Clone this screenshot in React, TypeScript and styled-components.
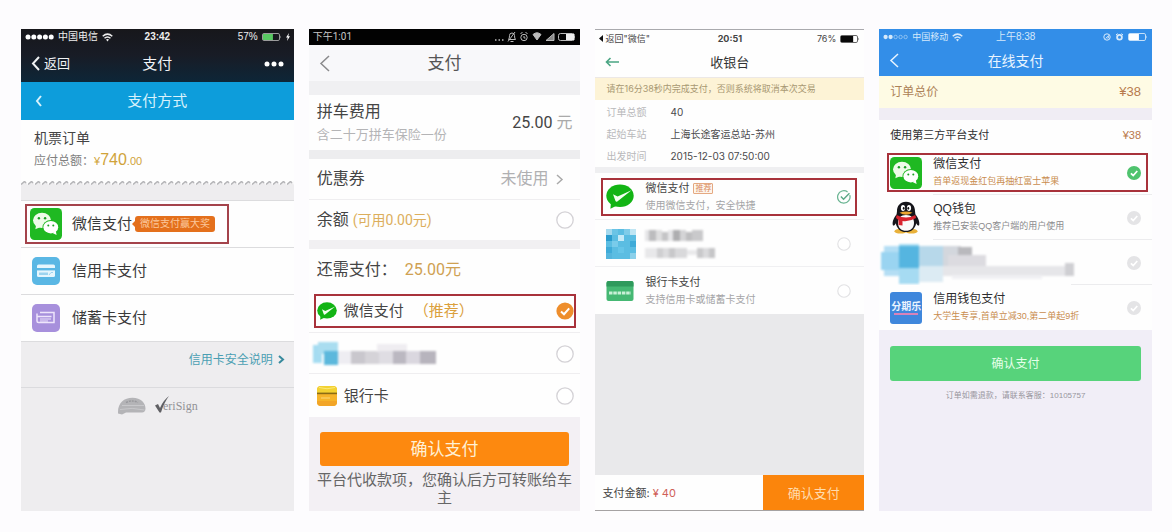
import React, { useState } from 'react';
import styled, { createGlobalStyle } from 'styled-components';

const GlobalStyle = createGlobalStyle`
  *, *::before, *::after { box-sizing: border-box; }
  body {
    margin: 0;
    background: #fdfcfe;
    font-family: "Liberation Sans", "Noto Sans CJK SC", sans-serif;
    color: #333;
  }
  button, input { font: inherit; margin: 0; }
  button { border: 0; padding: 0; background: none; color: inherit; cursor: pointer; }
  h1, h2, p, ul, dl, dd { margin: 0; padding: 0; font-weight: 400; }
  ul { list-style: none; }
  svg { display: block; flex: none; }
`;

/* ---------- shared layout ---------- */

const Gallery = styled.main`
  display: grid;
  grid-template-columns: 273fr 272fr 269fr 273fr;
  gap: 15px;
  min-height: 100vh;
  padding: 29px 20px 21px 21px;
`;

const Phone = styled.section<{ $bg: string; $font?: string }>`
  display: flex;
  flex-direction: column;
  min-width: 0;
  background: ${(p) => p.$bg};
  font-family: ${(p) => p.$font ?? '"Liberation Sans"'}, "Noto Sans CJK SC", sans-serif;
`;

const StatusBar = styled.div<{ $h?: number; $color: string; $size?: number; $bg?: string }>`
  display: grid;
  grid-template-columns: 1fr auto 1fr;
  align-items: center;
  min-height: ${(p) => p.$h ?? 16}px;
  padding: 0 4px;
  font-size: ${(p) => p.$size ?? 10}px;
  line-height: 14px;
  color: ${(p) => p.$color};
  background: ${(p) => p.$bg ?? 'transparent'};
`;

const StatusGroup = styled.span<{ $end?: boolean }>`
  display: flex;
  align-items: center;
  gap: 4px;
  justify-content: ${(p) => (p.$end ? 'flex-end' : 'flex-start')};
  white-space: nowrap;
`;

const NavBar = styled.header<{ $h: number; $bg?: string; $color: string }>`
  display: grid;
  grid-template-columns: 1fr auto 1fr;
  align-items: center;
  min-height: ${(p) => p.$h}px;
  padding: 0 10px;
  background: ${(p) => p.$bg ?? 'transparent'};
  color: ${(p) => p.$color};
`;

const NavTitle = styled.h1<{ $size: number; $weight?: number }>`
  font-size: ${(p) => p.$size}px;
  line-height: 24px;
  font-weight: ${(p) => p.$weight ?? 400};
`;

const NavButton = styled.button<{ $end?: boolean }>`
  display: flex;
  align-items: center;
  gap: 4px;
  justify-self: ${(p) => (p.$end ? 'end' : 'start')};
  font-size: 13px;
  line-height: 20px;
`;

const Band = styled.div<{ $h: number; $bg: string; $line?: string }>`
  min-height: ${(p) => p.$h}px;
  background: ${(p) => p.$bg};
  border-bottom: ${(p) => (p.$line ? `1px solid ${p.$line}` : '0')};
`;

const Row = styled.div<{ $h: number; $line?: string; $bg?: string; $pad?: string }>`
  display: flex;
  align-items: center;
  justify-content: space-between;
  min-height: ${(p) => p.$h}px;
  padding: ${(p) => p.$pad ?? '0 8px'};
  background: ${(p) => p.$bg ?? '#fefefe'};
  border-bottom: ${(p) => (p.$line ? `1px solid ${p.$line}` : '0')};
`;

const Text = styled.span<{ $size: number; $color?: string; $lh?: number; $weight?: number }>`
  font-size: ${(p) => p.$size}px;
  line-height: ${(p) => p.$lh ?? 20}px;
  color: ${(p) => p.$color ?? '#444'};
  font-weight: ${(p) => p.$weight ?? 400};
  white-space: nowrap;
`;

const Stack = styled.div`
  display: flex;
  flex-direction: column;
  flex: 1;
  min-width: 0;
`;

const Inline = styled.span<{ $gap?: number }>`
  display: flex;
  align-items: center;
  gap: ${(p) => p.$gap ?? 4}px;
`;

/* ---------- selectable options ---------- */

const OptionItem = styled.li<{ $h: number; $pad: string; $line?: string; $indent?: number }>`
  display: flex;
  flex-direction: column;
  justify-content: center;
  position: relative;
  min-height: ${(p) => p.$h}px;
  padding: ${(p) => p.$pad};
  background: #fefefe;
  &:not(:last-child)::after {
    content: '';
    position: absolute;
    left: ${(p) => p.$indent ?? 0}px;
    right: 0;
    bottom: 0;
    height: 1px;
    background: ${(p) => p.$line ?? '#eee'};
  }
`;

const OptionLabel = styled.label<{ $h: number; $pad: string; $gap: number; $marked?: boolean }>`
  display: flex;
  align-items: center;
  gap: ${(p) => p.$gap}px;
  min-height: ${(p) => p.$h}px;
  padding: ${(p) => p.$pad};
  border: 2px solid ${(p) => (p.$marked ? '#a8323b' : 'transparent')};
  cursor: pointer;
`;

const Control = styled.span<{ $d: number }>`
  position: relative;
  flex: none;
  width: ${(p) => p.$d}px;
  height: ${(p) => p.$d}px;
  svg { position: absolute; inset: 0; pointer-events: none; }
`;

const NativeInput = styled.input`
  appearance: none;
  display: block;
  width: 100%;
  height: 100%;
  border-radius: 50%;
  cursor: pointer;
`;

type Mark = 'orange' | 'outline' | 'green';

function Choice({ mark, size, type = 'radio', name, checked, label, onChange }: {
  mark: Mark; size: number; type?: 'radio' | 'checkbox'; name: string; checked: boolean; label?: string; onChange: () => void;
}) {
  const tick = 'M5 9.4 8 12.2 13.2 6.4';
  return (
    <Control $d={size}>
      <NativeInput type={type} name={name} checked={checked} aria-label={label} onChange={onChange} />
      <svg viewBox="0 0 18 18" width={size} height={size} fill="none">
        {mark === 'orange' && (checked
          ? <><circle cx="9" cy="9" r="8.6" fill="#ee8e2c" /><path d={tick} stroke="#fff" strokeWidth="2" /></>
          : <circle cx="9" cy="9" r="8.2" stroke="#d4d2d6" strokeWidth="1.3" fill="#fff" />)}
        {mark === 'outline' && (checked
          ? <><path d="M16.4 6.6A8 8 0 1 1 13.6 2.6" stroke="#6bb593" strokeWidth="1.6" /><path d="M5 8.4 8.4 11.8 16 4.2" stroke="#5aa886" strokeWidth="1.8" /></>
          : <circle cx="9" cy="9" r="8" stroke="#e2e2e4" strokeWidth="1.5" fill="#fff" />)}
        {mark === 'green' && (
          <><circle cx="9" cy="9" r="9" fill={checked ? '#4fc36e' : '#e4e4e6'} /><path d={tick} stroke="#fff" strokeWidth="2.2" /></>
        )}
      </svg>
    </Control>
  );
}

/* ---------- icons ---------- */

const Chevron = ({ dir = 'left', w, h, sw = 2, color = 'currentColor' }: { dir?: 'left' | 'right'; w: number; h: number; sw?: number; color?: string }) => (
  <svg width={w} height={h} viewBox={`0 0 ${w} ${h}`} fill="none" stroke={color} strokeWidth={sw}>
    <path d={dir === 'left' ? `M${w - 1} 1 2 ${h / 2} ${w - 1} ${h - 1}` : `M1 1 ${w - 2} ${h / 2} 1 ${h - 1}`} />
  </svg>
);

const Signal = ({ full, color, w = 29 }: { full: number; color: string; w?: number }) => (
  <svg width={w} height="6" viewBox="0 0 29 6">
    {[0, 1, 2, 3, 4].map((i) => (
      <circle key={i} cx={3 + i * 5.8} cy="3" r={i < full ? 2.5 : 2} fill={i < full ? color : 'none'} stroke={color} strokeWidth={i < full ? 0 : 0.6} />
    ))}
  </svg>
);

const Wifi = ({ color }: { color: string }) => (
  <svg width="11" height="9" viewBox="0 0 11 9" fill="none" stroke={color} strokeWidth="1.5">
    <path d="M.7 3.2Q5.5-1 10.3 3.2M2.5 5.3Q5.5 2.7 8.5 5.3" />
    <path d="M4 6.6Q5.5 5.6 7 6.6L5.5 8.4Z" fill={color} stroke="none" />
  </svg>
);

const Battery = ({ color, fill, level }: { color: string; fill: string; level: number }) => (
  <svg width="20" height="8" viewBox="0 0 20 8">
    <rect x=".5" y=".5" width="17" height="7" rx="1.4" fill="none" stroke={color} strokeWidth=".9" />
    <rect x="1" y="1" width={16 * level} height="6" fill={fill} />
    <path d="M18.4 2.5q1.4 1.5 0 3z" fill={color} />
  </svg>
);

const WeChatIcon = () => (
  <svg width="32" height="32" viewBox="0 0 32 32">
    <rect width="32" height="32" rx="4.5" fill="#1fb922" />
    <ellipse cx="12" cy="12.3" rx="9" ry="7.6" fill="#eefbe9" />
    <path d="M6 17.5 5.300 21.300 10 19.200Z" fill="#eefbe9" />
    <ellipse cx="20.800" cy="19.200" rx="8.300" ry="7.100" fill="#1fb922" />
    <ellipse cx="20.800" cy="19.200" rx="7.400" ry="6.200" fill="#fff" />
    <path d="M22.500 25 26.600 27 25.800 23Z" fill="#fff" />
    <g fill="#1b9e24">
      <circle cx="8.900" cy="10.300" r="1.200" /><circle cx="15.100" cy="10.300" r="1.200" />
      <circle cx="18.300" cy="17.500" r="1" /><circle cx="23.300" cy="17.500" r="1" />
    </g>
  </svg>
);

const WeChatPayIcon = ({ w, h }: { w: number; h: number }) => (
  <svg width={w} height={h} viewBox="0 0 28 25">
    <ellipse cx="14" cy="11.700" rx="13.700" ry="11.300" fill="#12b414" />
    <path d="M5 18 4.400 24.700 11 21.500Z" fill="#12b414" />
    <path d="M7 10.200 11.600 12.500 25.500 6.200 11.300 17.500C10.500 18 9.900 17.600 9.500 16.900Z" fill="#f2fff0" />
  </svg>
);

const CreditIcon = () => (
  <svg width="28" height="28" viewBox="0 0 28 28">
    <rect width="28" height="28" rx="5" fill="#5ab7e4" />
    <rect x="5" y="7.500" width="18" height="12.500" rx="1.500" fill="#e6f6fd" />
    <rect x="5" y="11" width="18" height="2.400" fill="#5ab7e4" />
    <rect x="7" y="15.500" width="9" height="2.500" fill="#9dd4ef" />
    <path d="M17 18l2-2.500h2" stroke="#9dd4ef" fill="none" />
  </svg>
);

const DebitIcon = () => (
  <svg width="28" height="28" viewBox="0 0 28 28" fill="none" stroke="#eee5fb" strokeWidth="1.500">
    <rect width="28" height="28" rx="5" fill="#a790dc" stroke="none" />
    <path d="M8 8.500H22V18.500H6.500Q5 18.500 5 17V9.500M5 12.500H19.500" />
    <path d="M8 15h11M8 17h8" strokeWidth="1" />
  </svg>
);

const BankCardYellow = () => (
  <svg width="20" height="20" viewBox="0 0 20 20">
    <rect width="20" height="20" rx="4" fill="#f6b42a" />
    <path d="M0 8V4a4 4 0 0 1 4-4h12a4 4 0 0 1 4 4v4Z" fill="#f3d232" />
    <path d="M2 1.500Q10 4 18 1.500" stroke="#fbe979" fill="none" />
    <rect y="6.600" width="20" height="1.600" fill="#8b6c14" />
    <path d="M0 15v1a4 4 0 0 0 4 4h12a4 4 0 0 0 4-4v-1Z" fill="#f2a527" />
    <path d="M4 12h9" stroke="#fcd979" />
  </svg>
);

const BankCardGreen = () => (
  <svg width="28" height="28" viewBox="0 0 28 28">
    <rect x=".500" y="4" width="27" height="20" rx="2" fill="#45b873" />
    <path d="M.500 9.500V6a2 2 0 0 1 2-2h23a2 2 0 0 1 2 2v3.500Z" fill="#2f9a5c" />
    <path d="M3 16h22" stroke="#c9f0d7" strokeWidth="3" strokeDasharray="3.500 .8" />
  </svg>
);

const PenguinIcon = () => (
  <svg width="32" height="33" viewBox="0 0 32 33">
    <ellipse cx="10.500" cy="30.200" rx="6" ry="2.400" fill="#e9b13a" />
    <ellipse cx="21.500" cy="30.200" rx="6" ry="2.400" fill="#e9b13a" />
    <path d="M16 .800c-6 0-9.200 4.500-9 9.500l-.400 3C4.200 16.500 2 20.500 2.800 24c.500 1.400 2 .200 3-1.800C6.800 27.500 10.500 31 16 31s9.200-3.500 10.200-8.800c1 2 2.500 3.200 3 1.800.8-3.500-1.400-7.500-3.800-10.700l-.4-3C25.200 5.300 22 .800 16 .800Z" fill="#15151a" />
    <path d="M16 14c-5.500 0-8 3.200-8 8 0 5 3.500 7.800 8 7.800s8-2.800 8-7.800c0-4.800-2.500-8-8-8Z" fill="#fafafa" />
    <ellipse cx="13" cy="7" rx="2.100" ry="3" fill="#fff" /><ellipse cx="19" cy="7" rx="2.100" ry="3" fill="#fff" />
    <ellipse cx="13.700" cy="7.300" rx=".9" ry="1.400" fill="#111" /><ellipse cx="18.300" cy="7.300" rx=".9" ry="1.400" fill="#111" />
    <path d="M9.500 11.800Q16 9.400 22.500 11.800 16 15.800 9.500 11.800Z" fill="#eba52f" />
    <path d="M6.700 14Q16 19.200 25.300 14l.7 3q-6.500 4-13.500 3v4.500l-4-.5v-5L6 17Z" fill="#d8232e" />
  </svg>
);

const FqlBadge = styled.span`
  display: flex;
  flex-direction: column;
  align-items: center;
  justify-content: center;
  flex: none;
  width: 32px;
  height: 32px;
  border-radius: 3px;
  background: #3f87dc;
  color: #e9f4ff;
  font-size: 10px;
  font-weight: 700;
  line-height: 13px;
  &::after { content: ''; width: 24px; height: 2px; background: #d982b8; }
`;

/* Mosaic squares covering a hidden provider's name. */
function Mosaic({ w, h, cells, soft = 1 }: { w: number; h: number; soft?: number; cells: [number, number, number, number, string][] }) {
  return (
    <svg width={w} height={h} viewBox={`0 0 ${w} ${h}`} overflow="visible" aria-hidden="true">
      <g style={{ filter: `blur(${soft}px)` }}>
        {cells.map(([x, y, cw, ch, c], i) => <rect key={i} x={x} y={y} width={cw} height={ch} fill={c} />)}
      </g>
    </svg>
  );
}

/* ---------- phone 1 ---------- */

const DarkTop = styled.div`
  background: linear-gradient(#17171b, #181c26 50%, #0d2638);
`;

const OrderBlock = styled.div`
  display: flex;
  flex-direction: column;
  padding: 8px 13px;
  background: #fefefe;
`;

const Price = styled.span`
  font-size: 16px;
  color: #d0a33a;
  small { font-size: 11px; }
`;

const MethodItem = styled.li`
  display: flex;
  align-items: center;
  min-height: 47px;
  padding: 0 4px;
  background: #fefefe;
  border-bottom: 1px solid #dcdcde;
`;

const MethodButton = styled.button<{ $marked?: boolean }>`
  display: flex;
  align-items: center;
  min-height: 40px;
  padding: 0 12px 0 3px;
  border: 2px solid ${(p) => (p.$marked ? '#a4434b' : 'transparent')};
  font-size: 15px;
  line-height: 22px;
  color: #3a3a3a;
  white-space: nowrap;
`;

const IconSlot = styled.span`
  display: flex;
  justify-content: center;
  width: 32px;
  margin-right: 10px;
`;

const Ribbon = styled.span`
  position: relative;
  margin-left: 3px;
  padding: 0 5px;
  border-radius: 3px;
  background: #e4701c;
  color: #fbc79b;
  font-size: 10px;
  line-height: 16px;
  &::before {
    content: '';
    position: absolute;
    left: -3px;
    top: 4px;
    border: 4px solid transparent;
    border-left: 0;
    border-right-color: #e4701c;
  }
`;

const LinkRow = styled.div`
  display: flex;
  justify-content: flex-end;
  align-items: center;
  min-height: 46px;
  padding: 0 9px 10px;
  border-bottom: 1px solid #dbdbde;
`;

const HelpLink = styled.a`
  display: flex;
  align-items: center;
  gap: 5px;
  color: #4b9fb3;
  font-size: 12px;
  line-height: 20px;
  text-decoration: none;
`;

const Seals = styled.div`
  display: flex;
  justify-content: center;
  align-items: center;
  gap: 9px;
  padding-top: 8px;
`;

const Verisign = styled.span`
  display: flex;
  align-items: center;
  font-family: "Liberation Serif", serif;
  font-size: 12px;
  line-height: 20px;
  color: #929296;
  svg { margin-right: -6px; }
`;

function FlightPhone() {
  return (
    <Phone $bg="#eeedef">
      <DarkTop>
        <StatusBar $color="#eee">
          <StatusGroup><Signal full={5} color="#fff" />中国电信<Wifi color="#eee" /></StatusGroup>
          <b>23:42</b>
          <StatusGroup $end>
            57%<Battery color="#aaa" fill="#58c862" level={0.62} />
            <svg width="4" height="8" viewBox="0 0 4 8"><path d="M3 0 0 4.500H1.700L1 8 4 3.300H2.300Z" fill="#fff" /></svg>
          </StatusGroup>
        </StatusBar>
        <NavBar $h={37} $color="#f0f2f4">
          <NavButton><Chevron w={9} h={15} />返回</NavButton>
          <NavTitle $size={15}>支付</NavTitle>
          <NavButton $end aria-label="更多">
            <svg width="20" height="6" viewBox="0 0 20 6" fill="#fff"><circle cx="3" cy="3" r="2.500" /><circle cx="10" cy="3" r="2.500" /><circle cx="17" cy="3" r="2.500" /></svg>
          </NavButton>
        </NavBar>
      </DarkTop>
      <NavBar $h={38} $bg="#0d9ddb" $color="#d8f2fc">
        <NavButton aria-label="返回上页"><Inline><span /><Chevron w={7} h={12} /></Inline></NavButton>
        <NavTitle as="h2" $size={15}>支付方式</NavTitle>
      </NavBar>
      <OrderBlock>
        <Text $size={14}>机票订单</Text>
        <Text $size={12} $lh={24} $color="#808080">应付总额：<Price><small>¥</small>740<small>.00</small></Price></Text>
      </OrderBlock>
      <svg width="100%" height="4" aria-hidden="true">
        <defs>
          <pattern id="tear" width="7" height="4" patternUnits="userSpaceOnUse">
            <rect width="7" height="4" fill="#fefefe" />
            <path d="M0 4 4 0 7 4Z" fill="#eeedef" /><path d="M0 3.500 3.500.500 5 2" stroke="#b5b5b8" strokeWidth="1.500" fill="none" />
          </pattern>
        </defs>
        <rect width="100%" height="4" fill="url(#tear)" />
      </svg>
      <Band $h={16} $bg="#eeedef" $line="#dcdcde" />
      <ul>
        <MethodItem>
          <MethodButton $marked><IconSlot><WeChatIcon /></IconSlot>微信支付<Ribbon>微信支付赢大奖</Ribbon></MethodButton>
        </MethodItem>
        <MethodItem><MethodButton><IconSlot><CreditIcon /></IconSlot>信用卡支付</MethodButton></MethodItem>
        <MethodItem><MethodButton><IconSlot><DebitIcon /></IconSlot>储蓄卡支付</MethodButton></MethodItem>
      </ul>
      <LinkRow>
        <HelpLink href="#card-safety">信用卡安全说明<Chevron dir="right" w={7} h={9} color="#388a9d" /></HelpLink>
      </LinkRow>
      <Seals>
        <svg width="29" height="18" viewBox="0 0 29 18">
          <path d="M1 15C1 6 7 .800 15.500.800 24 .800 28.500 6 28.500 11.500c0 2.500-1.500 4-3.500 4H9L5 17.500 1 16.500Z" fill="#b4b4b7" />
          <path d="M5 8.500H27M3 12.500Q15 10 27.500 13" stroke="#c8c8cb" fill="none" />
          <path d="M9 5.500q6-3 12 0" stroke="#98989c" strokeWidth="1.500" strokeDasharray="2 1" fill="none" />
        </svg>
        <Verisign>
          <svg width="14" height="20" viewBox="0 0 14 20"><path d="M0 9.500 3 8 5 12Q8 4.500 14 0 9 6.500 6 16.500H4.500Z" fill="#606064" /></svg>
          eriSign
        </Verisign>
      </Seals>
    </Phone>
  );
}

/* ---------- phone 2 ---------- */

const Footer = styled.footer<{ $bg: string; $pad: string }>`
  display: flex;
  flex-direction: column;
  flex: 1;
  padding: ${(p) => p.$pad};
  background: ${(p) => p.$bg};
`;

const PrimaryButton = styled.button<{ $h: number; $bg: string; $size: number; $color: string }>`
  min-height: ${(p) => p.$h}px;
  margin: 0 8px;
  border-radius: 3px;
  background: ${(p) => p.$bg};
  color: ${(p) => p.$color};
  font-size: ${(p) => p.$size}px;
  line-height: 24px;
`;

const Note = styled.p<{ $size: number; $lh: number; $color: string; $top: number }>`
  margin-top: ${(p) => p.$top}px;
  text-align: center;
  font-size: ${(p) => p.$size}px;
  line-height: ${(p) => p.$lh}px;
  color: ${(p) => p.$color};
`;

const AndroidIcons = () => (
  <svg width="82" height="12" viewBox="0 0 82 12" fill="none" stroke="#bbb" strokeWidth="1">
    <path d="M1 9h1.500M4.500 9H6M8 9h1.500" strokeWidth="1.500" />
    <path d="M14.500 8.500q1-1 1-4a2.500 2.500 0 0 1 5 0q0 3 1 4ZM16.500 10.500h3M21 1 14 10.500" />
    <circle cx="30" cy="6.500" r="3.200" /><path d="M30 5v2h1.500M26.500 3l2-2M33.500 3l-2-2" />
    <path d="M39 3.500Q43 0 47 3.500L43 9Z" fill="#bbb" />
    <path d="M52 9.500 60 2.500V9.500Z" fill="#888" />
    <rect x="64.500" y="2.500" width="16" height="7" rx="2" /><rect x="72" y="3" width="8" height="6" fill="#eee" stroke="none" />
  </svg>
);

function CarpoolPhone() {
  const [method, setMethod] = useState('wechat');
  const [balance, setBalance] = useState(false);
  const line = '#efeef0';
  return (
    <Phone $bg="#f2f0f3" $font="Roboto">
      <StatusBar $bg="#020202" $color="#c8c8c8">
        <StatusGroup>下午1:01</StatusGroup>
        <span />
        <StatusGroup $end><AndroidIcons /></StatusGroup>
      </StatusBar>
      <NavBar $h={36} $bg="#f8f8fa" $color="#555">
        <NavButton aria-label="返回"><Chevron w={11} h={17} sw={1.5} color="#8a8a8c" /></NavButton>
        <NavTitle $size={17}>支付</NavTitle>
      </NavBar>
      <Band $h={14} $bg="#f0f0f2" />
      <Row $h={55}>
        <Stack>
          <Text $size={16} $lh={24}>拼车费用</Text>
          <Text $size={13} $lh={22} $color="#b4b4b6">含二十万拼车保险一份</Text>
        </Stack>
        <Text $size={16}>25.00 <Text $size={16} $color="#aaa">元</Text></Text>
      </Row>
      <Band $h={9} $bg="#ededef" />
      <Row $h={41} $line={line}>
        <Text $size={16}>优惠券</Text>
        <Inline $gap={8}>
          <Text $size={16} $color="#b0b0b2">未使用</Text>
          <Chevron dir="right" w={8} h={11} sw={1.5} color="#aaa" />
          <span />
        </Inline>
      </Row>
      <Row as="label" $h={40} $pad="0 6px 0 8px">
        <Inline>
          <Text $size={16}>余额</Text>
          <Text $size={14} $color="#dcae5c">(可用0.00元)</Text>
        </Inline>
        <Choice mark="orange" size={18} type="checkbox" name="balance" checked={balance} onChange={() => setBalance(!balance)} />
      </Row>
      <Band $h={9} $bg="#f1f0f2" />
      <Row $h={42}>
        <Text $size={16}>还需支付：&nbsp;&nbsp;<Text $size={16} $color="#cfa152">25.00元</Text></Text>
      </Row>
      <ul>
        <OptionItem $h={42} $pad="0 4px 2px 5px" $line={line}>
          <OptionLabel $h={34} $pad="0 0 0 1px" $gap={7} $marked>
            <WeChatPayIcon w={20} h={18} />
            <Stack>
              <Inline $gap={10}>
                <Text $size={15}>微信支付</Text>
                <Text $size={15} $color="#dba03c">（推荐）</Text>
              </Inline>
            </Stack>
            <Choice mark="orange" size={18} name="carpool" checked={method === 'wechat'} onChange={() => setMethod('wechat')} />
          </OptionLabel>
        </OptionItem>
        <OptionItem $h={41} $pad="0 4px 0 5px" $line={line}>
          <OptionLabel $h={34} $pad="0" $gap={7}>
            <Stack>
              <Mosaic w={122} h={26} cells={[
                [-3, 4, 9, 18, '#a5dcf1'], [2, 1, 20, 12, '#a9ddf0'], [8, 10, 14, 14, '#5cb8dc'], [22, 10, 13, 13, '#eeedf2'],
                [35, 10, 14, 13, '#c9c7cd'], [49, 10, 14, 13, '#d5d3d8'], [61, 3, 30, 8, '#efedf1'], [63, 10, 14, 13, '#dfdde3'], [77, 10, 13, 13, '#bbb8c1'],
                [90, 10, 14, 13, '#dad7df'], [104, 10, 16, 13, '#b7b4bd'],
              ]} />
            </Stack>
            <Choice mark="orange" size={18} name="carpool" label="其他支付" checked={method === 'other'} onChange={() => setMethod('other')} />
          </OptionLabel>
        </OptionItem>
        <OptionItem $h={43} $pad="0 4px 0 5px">
          <OptionLabel $h={34} $pad="0 0 0 1px" $gap={7}>
            <BankCardYellow />
            <Stack><Text $size={15}>银行卡</Text></Stack>
            <Choice mark="orange" size={18} name="carpool" checked={method === 'bank'} onChange={() => setMethod('bank')} />
          </OptionLabel>
        </OptionItem>
      </ul>
      <Footer $bg="#f3f0f4" $pad="15px 3px 0">
        <PrimaryButton $h={34} $bg="#fd890f" $size={17} $color="#fff0d5">确认支付</PrimaryButton>
        <Note $size={15} $lh={18} $color="#666" $top={5}>平台代收款项，您确认后方可转账给车主</Note>
      </Footer>
    </Phone>
  );
}

/* ---------- phone 3 ---------- */

const CashierPhone = styled(Phone)`
  border-top: 1px solid #a9a9ad;
`;

const Notice = styled.p`
  padding: 0 11px;
  background: #fdf3d6;
  border-top: 1px solid #ece8e6;
  color: #a89872;
  font-size: 9px;
  line-height: 22px;
  white-space: nowrap;
`;

const Details = styled.dl`
  display: grid;
  grid-template-columns: 64px 1fr;
  padding: 1px 11px 0;
  background: #fefefe;
  font-size: 10px;
  line-height: 22px;
  dt { color: #b9b9bb; }
  dd { color: #4a4a4c; white-space: nowrap; }
`;

const RecommendTag = styled.span`
  padding: 0 1px;
  border: 1px solid #e5a982;
  border-radius: 1px;
  background: #fdf5ec;
  color: #d98a5c;
  font-size: 8px;
  line-height: 9px;
`;

const Filler = styled.div`
  flex: 1;
  background: #e9e9eb;
`;

const PayBar = styled.footer`
  display: grid;
  grid-template-columns: 168fr 101fr;
  min-height: 36px;
  background: #fefefe;
  border-bottom: 1px solid #a5a2a3;
`;

const PayTotal = styled.p`
  display: flex;
  align-items: center;
  gap: 3px;
  padding-left: 7px;
`;

const PayButton = styled.button`
  background: #fb850c;
  color: #ffdcae;
  font-size: 13px;
  line-height: 20px;
`;

function CashierScreen() {
  const [method, setMethod] = useState('wechat');
  const item = { $h: 47, $pad: '0 7px 0 6px', $line: '#f0f0f2' };
  const label = { $h: 38, $pad: '0 4px 0 3px', $gap: 11 };
  return (
    <CashierPhone $bg="#fefefe" $font="Inter">
      <StatusBar $h={17} $size={9} $color="#444">
        <StatusGroup>
          <Inline $gap={2}>
            <svg width="4" height="7" viewBox="0 0 4 7"><path d="M4 0V7L0 3.500Z" fill="#111" /></svg>
            返回"微信"
          </Inline>
        </StatusGroup>
        <b>20:51</b>
        <StatusGroup $end>76%<Battery color="#555" fill="#080808" level={0.76} /></StatusGroup>
      </StatusBar>
      <NavBar $h={30} $color="#333">
        <NavButton aria-label="返回">
          <svg width="14" height="10" viewBox="0 0 14 10" fill="none" stroke="#4aa583" strokeWidth="1.600"><path d="M14 5H1.500M5.500 1 1.500 5 5.500 9" /></svg>
        </NavButton>
        <NavTitle $size={13}>收银台</NavTitle>
      </NavBar>
      <Notice>请在16分38秒内完成支付，否则系统将取消本次交易</Notice>
      <Details>
        <dt>订单总额</dt><dd>40</dd>
        <dt>起始车站</dt><dd>上海长途客运总站-苏州</dd>
        <dt>出发时间</dt><dd>2015-12-03 07:50:00</dd>
      </Details>
      <Band $h={6} $bg="#efeff1" />
      <ul>
        <OptionItem {...item}>
          <OptionLabel {...label} $marked>
            <WeChatPayIcon w={28} h={25} />
            <Stack>
              <Inline><Text $size={11} $lh={17}>微信支付</Text><RecommendTag>推荐</RecommendTag></Inline>
              <Text $size={10} $lh={17} $color="#a5a5a7">使用微信支付，安全快捷</Text>
            </Stack>
            <Choice mark="outline" size={14} name="cashier" checked={method === 'wechat'} onChange={() => setMethod('wechat')} />
          </OptionLabel>
        </OptionItem>
        <OptionItem {...item}>
          <OptionLabel {...label}>
            <Mosaic w={28} h={30} soft={0} cells={[
              [0, 0, 30, 30, '#5bbde2'], [0, 0, 6, 6, '#a4d9ee'], [6, 0, 6, 6, '#6ac4e6'], [18, 0, 6, 6, '#7fcce9'], [24, 0, 6, 6, '#bfe5f3'],
              [0, 6, 6, 6, '#2a9cce'], [12, 6, 6, 6, '#c5eaf8'], [6, 12, 6, 6, '#79cbea'], [24, 12, 6, 6, '#3fabd8'], [0, 18, 6, 6, '#3fabd8'],
              [12, 18, 6, 6, '#66c5e8'], [24, 24, 6, 6, '#8bd0ea'], [0, 24, 6, 6, '#54b5dd'],
            ]} />
            <Stack>
              <Mosaic w={72} h={30} cells={[
                [0, 1, 4, 11, '#e5e5e7'], [4, 1, 7, 11, '#bcbcbe'], [11, 1, 6, 11, '#dededf'], [17, 3, 6, 9, '#c4c4c6'], [23, 1, 5, 11, '#e6e6e8'],
                [28, 1, 7, 11, '#aeaeb0'], [35, 1, 6, 11, '#d4d4d6'], [41, 3, 6, 9, '#bebec0'], [47, 1, 11, 11, '#c9c9cb'],
                [0, 19, 12, 10, '#e8e8ea'], [12, 19, 6, 10, '#cfcfd1'], [18, 19, 6, 10, '#dcdcde'], [24, 19, 6, 10, '#c8c8ca'], [30, 19, 12, 10, '#d9d9db'],
                [42, 21, 10, 5, '#e9e9eb'], [52, 19, 6, 10, '#c9c9cb'], [58, 19, 6, 10, '#dadadc'], [64, 19, 6, 10, '#c6c6c8'],
              ]} />
            </Stack>
            <Choice mark="outline" size={14} name="cashier" label="其他支付" checked={method === 'other'} onChange={() => setMethod('other')} />
          </OptionLabel>
        </OptionItem>
        <OptionItem {...item}>
          <OptionLabel {...label}>
            <BankCardGreen />
            <Stack>
              <Text $size={11} $lh={17}>银行卡支付</Text>
              <Text $size={10} $lh={17} $color="#a5a5a7">支持信用卡或储蓄卡支付</Text>
            </Stack>
            <Choice mark="outline" size={14} name="cashier" checked={method === 'bank'} onChange={() => setMethod('bank')} />
          </OptionLabel>
        </OptionItem>
      </ul>
      <Filler />
      <PayBar>
        <PayTotal><Text $size={11}>支付金额:</Text><Text $size={11} $color="#cf5f58">¥ 40</Text></PayTotal>
        <PayButton>确认支付</PayButton>
      </PayBar>
    </CashierPhone>
  );
}

/* ---------- phone 4 ---------- */

const BlueTop = styled.div`
  background: #338ee8;
`;

function OnlinePhone() {
  const [method, setMethod] = useState('wechat');
  const item = { $h: 45, $pad: '0 4px 0 8px', $line: '#ececee', $indent: 54 };
  const label = { $h: 39, $pad: '0 5px 0 1px', $gap: 11 };
  const radio = (id: string, text?: string) => (
    <Choice mark="green" size={14} name="online" label={text} checked={method === id} onChange={() => setMethod(id)} />
  );
  return (
    <Phone $bg="#f1eef7">
      <BlueTop>
        <StatusBar $size={9} $color="#d5e9fb">
          <StatusGroup><Signal full={2} color="#d5e9fb" w={25} />中国移动<Wifi color="#d5e9fb" /></StatusGroup>
          <Text $size={10} $lh={14} $color="#d5e9fb">上午8:38</Text>
          <StatusGroup $end>
            <svg width="21" height="8" viewBox="0 0 21 8" fill="none" stroke="#d5e9fb">
              <circle cx="4" cy="4" r="3.200" /><path d="M2.500 5.500 5.500 2.500V5H3.500" strokeWidth=".8" />
              <circle cx="16.500" cy="4.200" r="2.400" strokeWidth="1.800" /><path d="M13 2l1.500-1.500M20 2 18.500.5" />
            </svg>
            <Battery color="#d5e9fb" fill="#fff" level={0.62} />
          </StatusGroup>
        </StatusBar>
        <NavBar $h={31} $color="#e8f4ff">
          <NavButton aria-label="返回"><Chevron w={10} h={15} sw={1.5} /></NavButton>
          <NavTitle $size={14}>在线支付</NavTitle>
        </NavBar>
      </BlueTop>
      <Row $h={32} $bg="#fefbe4" $pad="0 11px">
        <Text $size={12} $color="#ad8257">订单总价</Text>
        <Text $size={13} $color="#b77a4c">¥38</Text>
      </Row>
      <Band $h={12} $bg="#f0edf4" />
      <Row $h={30} $pad="0 11px">
        <Text $size={11} $color="#2e2e30">使用第三方平台支付</Text>
        <Text $size={11} $color="#b9794a">¥38</Text>
      </Row>
      <ul>
        <OptionItem {...item}>
          <OptionLabel {...label} $marked>
            <WeChatIcon />
            <Stack>
              <Text $size={12} $lh={17} $color="#2e2e30">微信支付</Text>
              <Text $size={9} $lh={16} $color="#c98d4f">首单返现金红包再抽红富士苹果</Text>
            </Stack>
            {radio('wechat')}
          </OptionLabel>
        </OptionItem>
        <OptionItem {...item}>
          <OptionLabel {...label}>
            <PenguinIcon />
            <Stack>
              <Text $size={12} $lh={17} $color="#2e2e30">QQ钱包</Text>
              <Text $size={9} $lh={16} $color="#8c8c8e">推荐已安装QQ客户端的用户使用</Text>
            </Stack>
            {radio('qq')}
          </OptionLabel>
        </OptionItem>
        <OptionItem {...item} $pad="0 4px 0 0" $indent={192}>
          <OptionLabel {...label}>
            <Stack>
              <Mosaic w={200} h={38} cells={[
                [2, 2, 18, 30, '#b4def4'], [-1, 8, 20, 18, '#9ad4f1'], [17, 0, 20, 40, '#a6dbf2'], [17, 2, 20, 22, '#55b5e0'], [37, 2, 24, 20, '#b7d8ea'],
                [61, 2, 18, 20, '#d3d7dd'], [76, 3, 14, 12, '#b9b9bd'], [66, 11, 38, 11, '#dcdbe0'], [37, 22, 24, 16, '#dcebf3'], [61, 22, 130, 10, '#e6e6e9'],
                [70, 31, 90, 4, '#f0f0f3'], [183, 19, 9, 13, '#cfcfd3'],
              ]} />
            </Stack>
            {radio('other', '其他支付')}
          </OptionLabel>
        </OptionItem>
        <OptionItem {...item}>
          <OptionLabel {...label}>
            <FqlBadge>分期乐</FqlBadge>
            <Stack>
              <Text $size={12} $lh={17} $color="#2e2e30">信用钱包支付</Text>
              <Text $size={9} $lh={16} $color="#c98d4f">大学生专享,首单立减30,第二单起9折</Text>
            </Stack>
            {radio('fenqile')}
          </OptionLabel>
        </OptionItem>
      </ul>
      <Footer $bg="#f1eef7" $pad="16px 3px 0">
        <PrimaryButton $h={35} $bg="#57d37b" $size={12} $color="#e6ffea">确认支付</PrimaryButton>
        <Note $size={8} $lh={16} $color="#98969e" $top={7}>订单如需退款，请联系客服：10105757</Note>
      </Footer>
    </Phone>
  );
}

export default function App() {
  return (
    <>
      <GlobalStyle />
      <Gallery lang="zh-CN">
        <FlightPhone />
        <CarpoolPhone />
        <CashierScreen />
        <OnlinePhone />
      </Gallery>
    </>
  );
}
